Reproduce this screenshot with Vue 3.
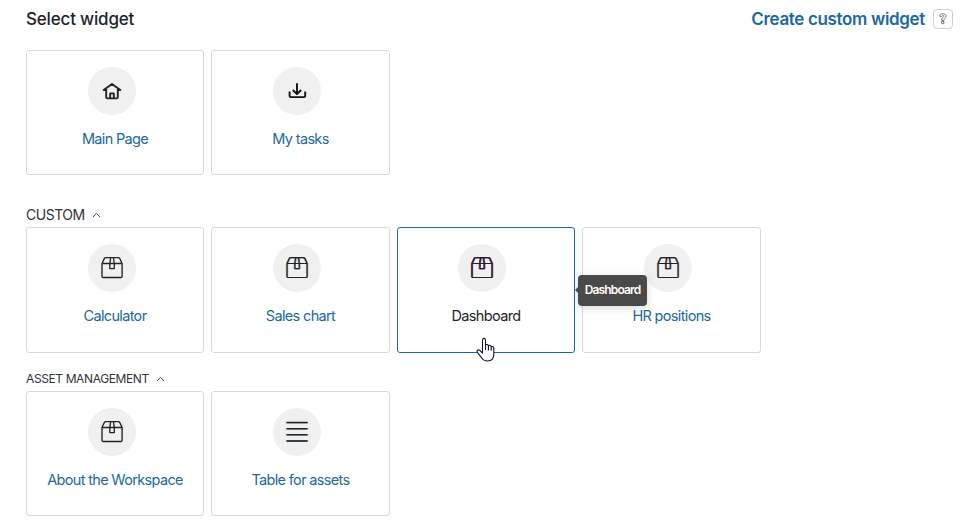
<script setup>
const sections = [
  {
    id: 'general',
    title: '',
    items: [
      { label: 'Main Page', icon: 'home' },
      { label: 'My tasks', icon: 'download' },
    ],
  },
  {
    id: 'custom',
    title: 'CUSTOM',
    items: [
      { label: 'Calculator', icon: 'box' },
      { label: 'Sales chart', icon: 'box', fringe: 'amber' },
      { label: 'Dashboard', icon: 'box', fringe: 'red', active: true },
      { label: 'HR positions', icon: 'box', fringe: 'amber' },
    ],
  },
  {
    id: 'assets',
    title: 'ASSET MANAGEMENT',
    items: [
      { label: 'About the Workspace', icon: 'box' },
      { label: 'Table for assets', icon: 'lines', fringe: 'amber' },
    ],
  },
]

const paths = {
  home: 'M15 23.5 24 17 33 23.5M18.2 22V30.2Q18.2 31.4 19.4 31.4H28.6Q29.8 31.4 29.8 30.2V22M22.2 31V26.4H25.8V31',
  download: 'M24 16.3V27M19.8 23 24 27.1 28.2 23M16.6 24.6V28.9Q16.6 30.1 17.8 30.1H31Q32.2 30.1 32.2 28.9V24.6',
  box: 'M14 19.5 16.3 14.6Q16.8 13.6 17.9 13.6H30.2Q31.3 13.6 31.8 14.6L34.1 19.5V32.4Q34.1 33.5 33 33.5H15.1Q14 33.5 14 32.4ZM14 19.5H34.1M22.7 13.6 21.8 19.5V24.6H26.3V19.5L25.4 13.6',
  lines: 'M13.5 14.6H34.5M13.5 20.7H34.5M13.5 26.8H34.5M13.5 32.9H34.5',
}
</script>

<template>
  <main class="page">
    <header class="top">
      <h1>Select widget</h1>
      <div class="create">
        <a class="create-link">Create custom widget</a>
        <span class="help">
          <svg width="12" height="14" viewBox="0 0 12 14">
            <path d="M2.5 4.2C2.5 .8 9 .8 9 4.2 9 6.4 6.9 6.2 6.9 8.5H4.6C4.6 5.7 6.8 5.8 6.8 4.3 6.8 3.1 4.7 3.1 4.7 4.5Z" />
            <path d="M4.6 9.5H6.9V11.7H4.6Z" />
          </svg>
        </span>
      </div>
    </header>

    <section v-for="s in sections" :key="s.id" :class="['section', s.id]">
      <h2 v-if="s.title">
        <span>{{ s.title }}</span>
        <svg class="chevron" width="9" height="6" viewBox="0 0 9 6"><path d="M1 5 4.5 1.3 8 5" /></svg>
      </h2>
      <div class="cards">
        <article v-for="w in s.items" :key="w.label" :class="['card', { active: w.active }]">
          <svg :class="['icon', w.icon, w.fringe]" width="48" height="48" viewBox="0 0 48 48">
            <circle cx="24" cy="24" r="24" />
            <g v-if="w.fringe" class="fringe">
              <path class="warm" transform="translate(-0.6 0)" :d="paths[w.icon]" />
              <path class="cool" transform="translate(0.6 0)" :d="paths[w.icon]" />
            </g>
            <path class="main" :d="paths[w.icon]" />
          </svg>
          <span class="label">{{ w.label }}</span>
          <template v-if="w.active">
            <div class="tooltip">Dashboard</div>
            <svg class="pointer" width="19" height="26" viewBox="0 0 19 26">
              <path d="M6.5 15V3.2C6.5.7 9.5.7 9.5 3.2V8.2C10.5 7 12.2 7.5 12.4 8.8 13.4 7.9 15 8.4 15.2 9.8 16.2 9 17.8 9.7 17.8 11.2V17C17.8 21.5 15.3 24 11.5 24 8.2 24 6.7 22.6 5.2 20.2L1.3 15.3C.4 13.6 2.2 12.3 3.8 13.3L6.5 16Z" />
              <path d="M9.5 8V13M12.4 8.8V13.4M15.2 9.8V13.8" />
            </svg>
          </template>
        </article>
      </div>
    </section>
  </main>
</template>

<style>
body {
  margin: 0;
  background: #fff;
}
</style>

<style scoped>
.page {
  box-sizing: border-box;
  width: 962px;
  height: 527px;
  padding: 8px 9px 0 26px;
  overflow: hidden;
  font-family: Inter, "Liberation Sans", sans-serif;
  color: #202428;
}
.top {
  display: flex;
  justify-content: space-between;
  align-items: center;
  height: 22px;
  margin-bottom: 20px;
}
h1 {
  margin: 0;
  font-size: 17px;
  line-height: 22px;
  font-weight: 500;
  letter-spacing: -0.18px;
}
.create {
  display: flex;
  align-items: center;
  gap: 8px;
}
.create-link {
  color: #21689d;
  font-size: 17px;
  line-height: 22px;
  font-weight: 600;
  letter-spacing: -0.34px;
}
.help {
  box-sizing: border-box;
  display: flex;
  align-items: center;
  justify-content: center;
  width: 20px;
  height: 20px;
  border: 1px solid #d0d0d0;
  border-radius: 4px;
}
.help path {
  fill: #fff;
  stroke: #757575;
  stroke-width: 0.95;
}
h2 {
  display: flex;
  align-items: center;
  gap: 7px;
  box-sizing: border-box;
  height: 22px;
  margin: 0;
  padding-bottom: 2px;
  font-weight: 400;
  font-size: 14px;
  line-height: 20px;
  color: #303338;
  white-space: nowrap;
}
.custom h2 {
  letter-spacing: -0.5px;
}
.assets h2 {
  font-size: 12px;
  letter-spacing: -0.39px;
}
.chevron path {
  fill: none;
  stroke: #45484c;
  stroke-width: 1;
}
.general {
  height: 155px;
}
.custom {
  height: 164px;
}
.cards {
  display: grid;
  grid-template-columns: 178px 179px 178px 179px;
  grid-auto-rows: 125px;
  gap: 7px;
}
.custom .cards {
  grid-auto-rows: 126px;
}
.card {
  position: relative;
  box-sizing: border-box;
  display: flex;
  flex-direction: column;
  align-items: center;
  gap: 14px;
  padding-top: 16px;
  border: 1px solid #d8d8d8;
  border-radius: 3px;
  color: #21689d;
}
.card.active {
  border-color: #21689d;
  color: #202428;
  z-index: 1;
}
.icon {
  align-self: flex-start;
  margin-left: 61px;
  flex: none;
}
.active .icon {
  margin-left: 60px;
}
.icon circle {
  fill: #f0f0f0;
}
.icon path {
  fill: none;
  stroke: #202428;
  stroke-width: 1.35;
  stroke-linejoin: round;
}
.icon.home path {
  stroke-width: 1.9;
}
.icon.download path {
  stroke: #111;
  stroke-width: 1.9;
}
.icon .fringe path {
  stroke-width: 1.1;
}
.icon .fringe .warm {
  stroke: #e29a4a;
}
.icon.red .fringe .warm {
  stroke: #b5433c;
}
.icon .fringe .cool {
  stroke: #4c8ed0;
}
.icon.red .fringe .cool {
  stroke: #4050b8;
}
.icon.box .fringe + .main {
  stroke-width: 1.1;
}
.icon.lines .main {
  stroke-width: 1.5;
}
.label {
  font-size: 14.5px;
  line-height: 20px;
  letter-spacing: -0.66px;
  white-space: nowrap;
}
.tooltip {
  position: absolute;
  left: 180px;
  top: 47px;
  box-sizing: border-box;
  width: 69px;
  height: 31px;
  border-radius: 4px;
  background: #4a4a4a;
  box-shadow: 0 2px 8px rgba(0, 0, 0, 0.15);
  color: #fff;
  font-size: 12px;
  font-weight: 600;
  line-height: 30px;
  letter-spacing: -0.85px;
  text-align: center;
}
.tooltip::before {
  content: "";
  position: absolute;
  left: -3px;
  top: 12px;
  border: 3px solid transparent;
  border-left: 0;
  border-right-color: #4a4a4a;
}
.pointer {
  position: absolute;
  left: 78px;
  top: 109px;
}
.pointer path {
  fill: #fff;
  stroke: #14142b;
  stroke-width: 1.1;
  stroke-linejoin: round;
}
</style>
